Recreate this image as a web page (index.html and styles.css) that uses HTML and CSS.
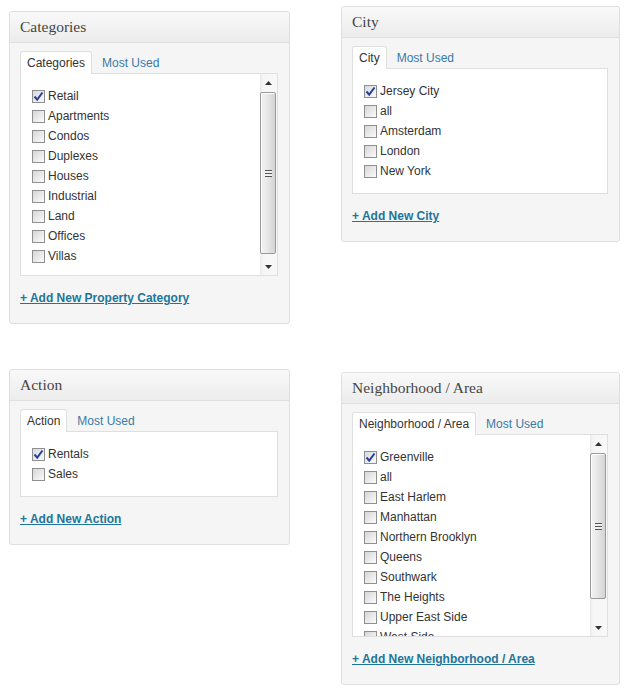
FILE: index.html
```html
<!DOCTYPE html>
<html lang="en">
<head>
<meta charset="utf-8">
<title>Taxonomy boxes</title>
<link rel="stylesheet" href="styles.css">
</head>
<body>
<div class="page">
  <div class="col col-left">
    <div class="postbox">
      <h3 class="hndle">Categories</h3>
      <div class="inside">
        <ul class="tabs"><li class="tab active">Categories</li><li class="tab"><a href="#">Most Used</a></li></ul>
        <div class="panel scroll">
          <ul class="list">
            <li><span class="cb checked"><svg width="11" height="11" viewBox="0 0 11 11"><path d="M1.5 5.5 L4.2 8.6 L9.5 1.5" fill="none" stroke="#2c3f94" stroke-width="2"/></svg></span>Retail</li>
            <li><span class="cb"></span>Apartments</li>
            <li><span class="cb"></span>Condos</li>
            <li><span class="cb"></span>Duplexes</li>
            <li><span class="cb"></span>Houses</li>
            <li><span class="cb"></span>Industrial</li>
            <li><span class="cb"></span>Land</li>
            <li><span class="cb"></span>Offices</li>
            <li><span class="cb"></span>Villas</li>
          </ul>
          <div class="sb">
            <div class="sb-btn"><svg width="7" height="4" viewBox="0 0 7 4"><path d="M3.5 0 L7 4 L0 4 Z" fill="#333"/></svg></div>
            <div class="sb-track"><div class="sb-thumb" style="height:162px"><span class="grip"></span></div></div>
            <div class="sb-btn"><svg width="7" height="4" viewBox="0 0 7 4"><path d="M0 0 L7 0 L3.5 4 Z" fill="#333"/></svg></div>
          </div>
        </div>
        <p class="add"><a href="#">+ Add New Property Category</a></p>
      </div>
    </div>

    <div class="postbox second-left">
      <h3 class="hndle">Action</h3>
      <div class="inside">
        <ul class="tabs"><li class="tab active">Action</li><li class="tab"><a href="#">Most Used</a></li></ul>
        <div class="panel">
          <ul class="list">
            <li><span class="cb checked"><svg width="11" height="11" viewBox="0 0 11 11"><path d="M1.5 5.5 L4.2 8.6 L9.5 1.5" fill="none" stroke="#2c3f94" stroke-width="2"/></svg></span>Rentals</li>
            <li><span class="cb"></span>Sales</li>
          </ul>
        </div>
        <p class="add"><a href="#">+ Add New Action</a></p>
      </div>
    </div>
  </div>

  <div class="col col-right">
    <div class="postbox">
      <h3 class="hndle">City</h3>
      <div class="inside">
        <ul class="tabs"><li class="tab active">City</li><li class="tab"><a href="#">Most Used</a></li></ul>
        <div class="panel">
          <ul class="list">
            <li><span class="cb checked"><svg width="11" height="11" viewBox="0 0 11 11"><path d="M1.5 5.5 L4.2 8.6 L9.5 1.5" fill="none" stroke="#2c3f94" stroke-width="2"/></svg></span>Jersey City</li>
            <li><span class="cb"></span>all</li>
            <li><span class="cb"></span>Amsterdam</li>
            <li><span class="cb"></span>London</li>
            <li><span class="cb"></span>New York</li>
          </ul>
        </div>
        <p class="add"><a href="#">+ Add New City</a></p>
      </div>
    </div>

    <div class="postbox second-right">
      <h3 class="hndle">Neighborhood / Area</h3>
      <div class="inside">
        <ul class="tabs"><li class="tab active">Neighborhood / Area</li><li class="tab"><a href="#">Most Used</a></li></ul>
        <div class="panel scroll">
          <ul class="list">
            <li><span class="cb checked"><svg width="11" height="11" viewBox="0 0 11 11"><path d="M1.5 5.5 L4.2 8.6 L9.5 1.5" fill="none" stroke="#2c3f94" stroke-width="2"/></svg></span>Greenville</li>
            <li><span class="cb"></span>all</li>
            <li><span class="cb"></span>East Harlem</li>
            <li><span class="cb"></span>Manhattan</li>
            <li><span class="cb"></span>Northern Brooklyn</li>
            <li><span class="cb"></span>Queens</li>
            <li><span class="cb"></span>Southwark</li>
            <li><span class="cb"></span>The Heights</li>
            <li><span class="cb"></span>Upper East Side</li>
            <li><span class="cb"></span>West Side</li>
          </ul>
          <div class="sb">
            <div class="sb-btn"><svg width="7" height="4" viewBox="0 0 7 4"><path d="M3.5 0 L7 4 L0 4 Z" fill="#333"/></svg></div>
            <div class="sb-track"><div class="sb-thumb" style="height:146px"><span class="grip"></span></div></div>
            <div class="sb-btn"><svg width="7" height="4" viewBox="0 0 7 4"><path d="M0 0 L7 0 L3.5 4 Z" fill="#333"/></svg></div>
          </div>
        </div>
        <p class="add"><a href="#">+ Add New Neighborhood / Area</a></p>
      </div>
    </div>
  </div>
</div>
</body>
</html>
```
FILE: styles.css
```css
* { box-sizing: border-box; }

html, body {
  margin: 0;
  padding: 0;
  background: #ffffff;
}

body {
  font-family: "Liberation Sans", Arial, sans-serif;
  font-size: 12px;
  color: #333333;
}

.page {
  display: flex;
  align-items: flex-start;
}

.col {
  display: flex;
  flex-direction: column;
}

.col-left {
  width: 281px;
  margin-left: 9px;
  padding-top: 11px;
}

.col-right {
  width: 279px;
  margin-left: 51px;
  padding-top: 6px;
}

.second-left { margin-top: 45px; }
.second-right { margin-top: 130px; }

.postbox {
  border: 1px solid #dfdfdf;
  border-radius: 3px;
  background: #f5f5f5;
  box-shadow: inset 0 1px 0 #ffffff;
}

.hndle {
  margin: 0;
  height: 31px;
  padding: 0 10px;
  border-bottom: 1px solid #dfdfdf;
  border-radius: 3px 3px 0 0;
  background: linear-gradient(to bottom, #f9f9f9, #ececec);
  font-family: "Liberation Serif", Georgia, serif;
  font-size: 15.5px;
  font-weight: normal;
  line-height: 30px;
  color: #464646;
}

.inside {
  padding: 8px 11px 17px 10px;
}

.tabs {
  display: flex;
  gap: 3px;
  margin: 0;
  padding: 0;
  list-style: none;
}

.tab {
  padding: 3px 6px 2px;
  line-height: 16px;
  border: 1px solid transparent;
  border-bottom: 0;
}

.tab a {
  color: #3a7aa6;
  text-decoration: none;
}

.tab.active {
  position: relative;
  z-index: 1;
  background: #ffffff;
  border-color: #dfdfdf;
  border-radius: 3px 3px 0 0;
  margin-bottom: -1px;
  padding-bottom: 3px;
  color: #333333;
}

.panel {
  display: flex;
  border: 1px solid #dfdfdf;
  background: #ffffff;
}

.panel.scroll {
  height: 203px;
}

.list {
  flex: 1;
  margin: 0;
  padding: 12px 0 12px 11px;
  list-style: none;
  overflow: hidden;
}

.list li {
  display: flex;
  align-items: center;
  height: 20px;
  line-height: 20px;
  white-space: nowrap;
}

.cb {
  display: flex;
  align-items: center;
  justify-content: center;
  flex: none;
  width: 13px;
  height: 13px;
  margin-right: 3px;
  border: 1px solid #8f8f8f;
  background: linear-gradient(135deg, #d6d6d6, #f4f4f4 80%, #fbfbfb);
}

.cb.checked {
  background: linear-gradient(135deg, #d4d9e3, #f2f4f8 80%);
}

.sb {
  display: flex;
  flex-direction: column;
  width: 17px;
  flex: none;
  background: linear-gradient(to right, #e9e9e9, #f6f6f6 3px, #f8f8f8);
}

.sb-btn {
  display: flex;
  align-items: center;
  justify-content: center;
  height: 17px;
  flex: none;
}

.sb-track {
  flex: 1;
  padding-top: 1px;
}

.sb-thumb {
  display: flex;
  align-items: center;
  justify-content: center;
  width: 16px;
  border: 1px solid #9a9a9a;
  border-radius: 2px;
  background: linear-gradient(to right, #f4f4f4, #e8e8e8 45%, #d3d3d3);
  box-shadow: inset 1px 1px 0 #ffffff;
}

.grip {
  display: block;
  width: 7px;
  height: 7px;
  background: repeating-linear-gradient(to bottom, #555555 0, #555555 1px, #f0f0f0 1px, #f0f0f0 3px);
}

.add {
  margin: 14px 0 0;
  line-height: 16px;
}

.add a {
  color: #21759b;
  font-weight: bold;
  text-decoration: underline;
}
```
